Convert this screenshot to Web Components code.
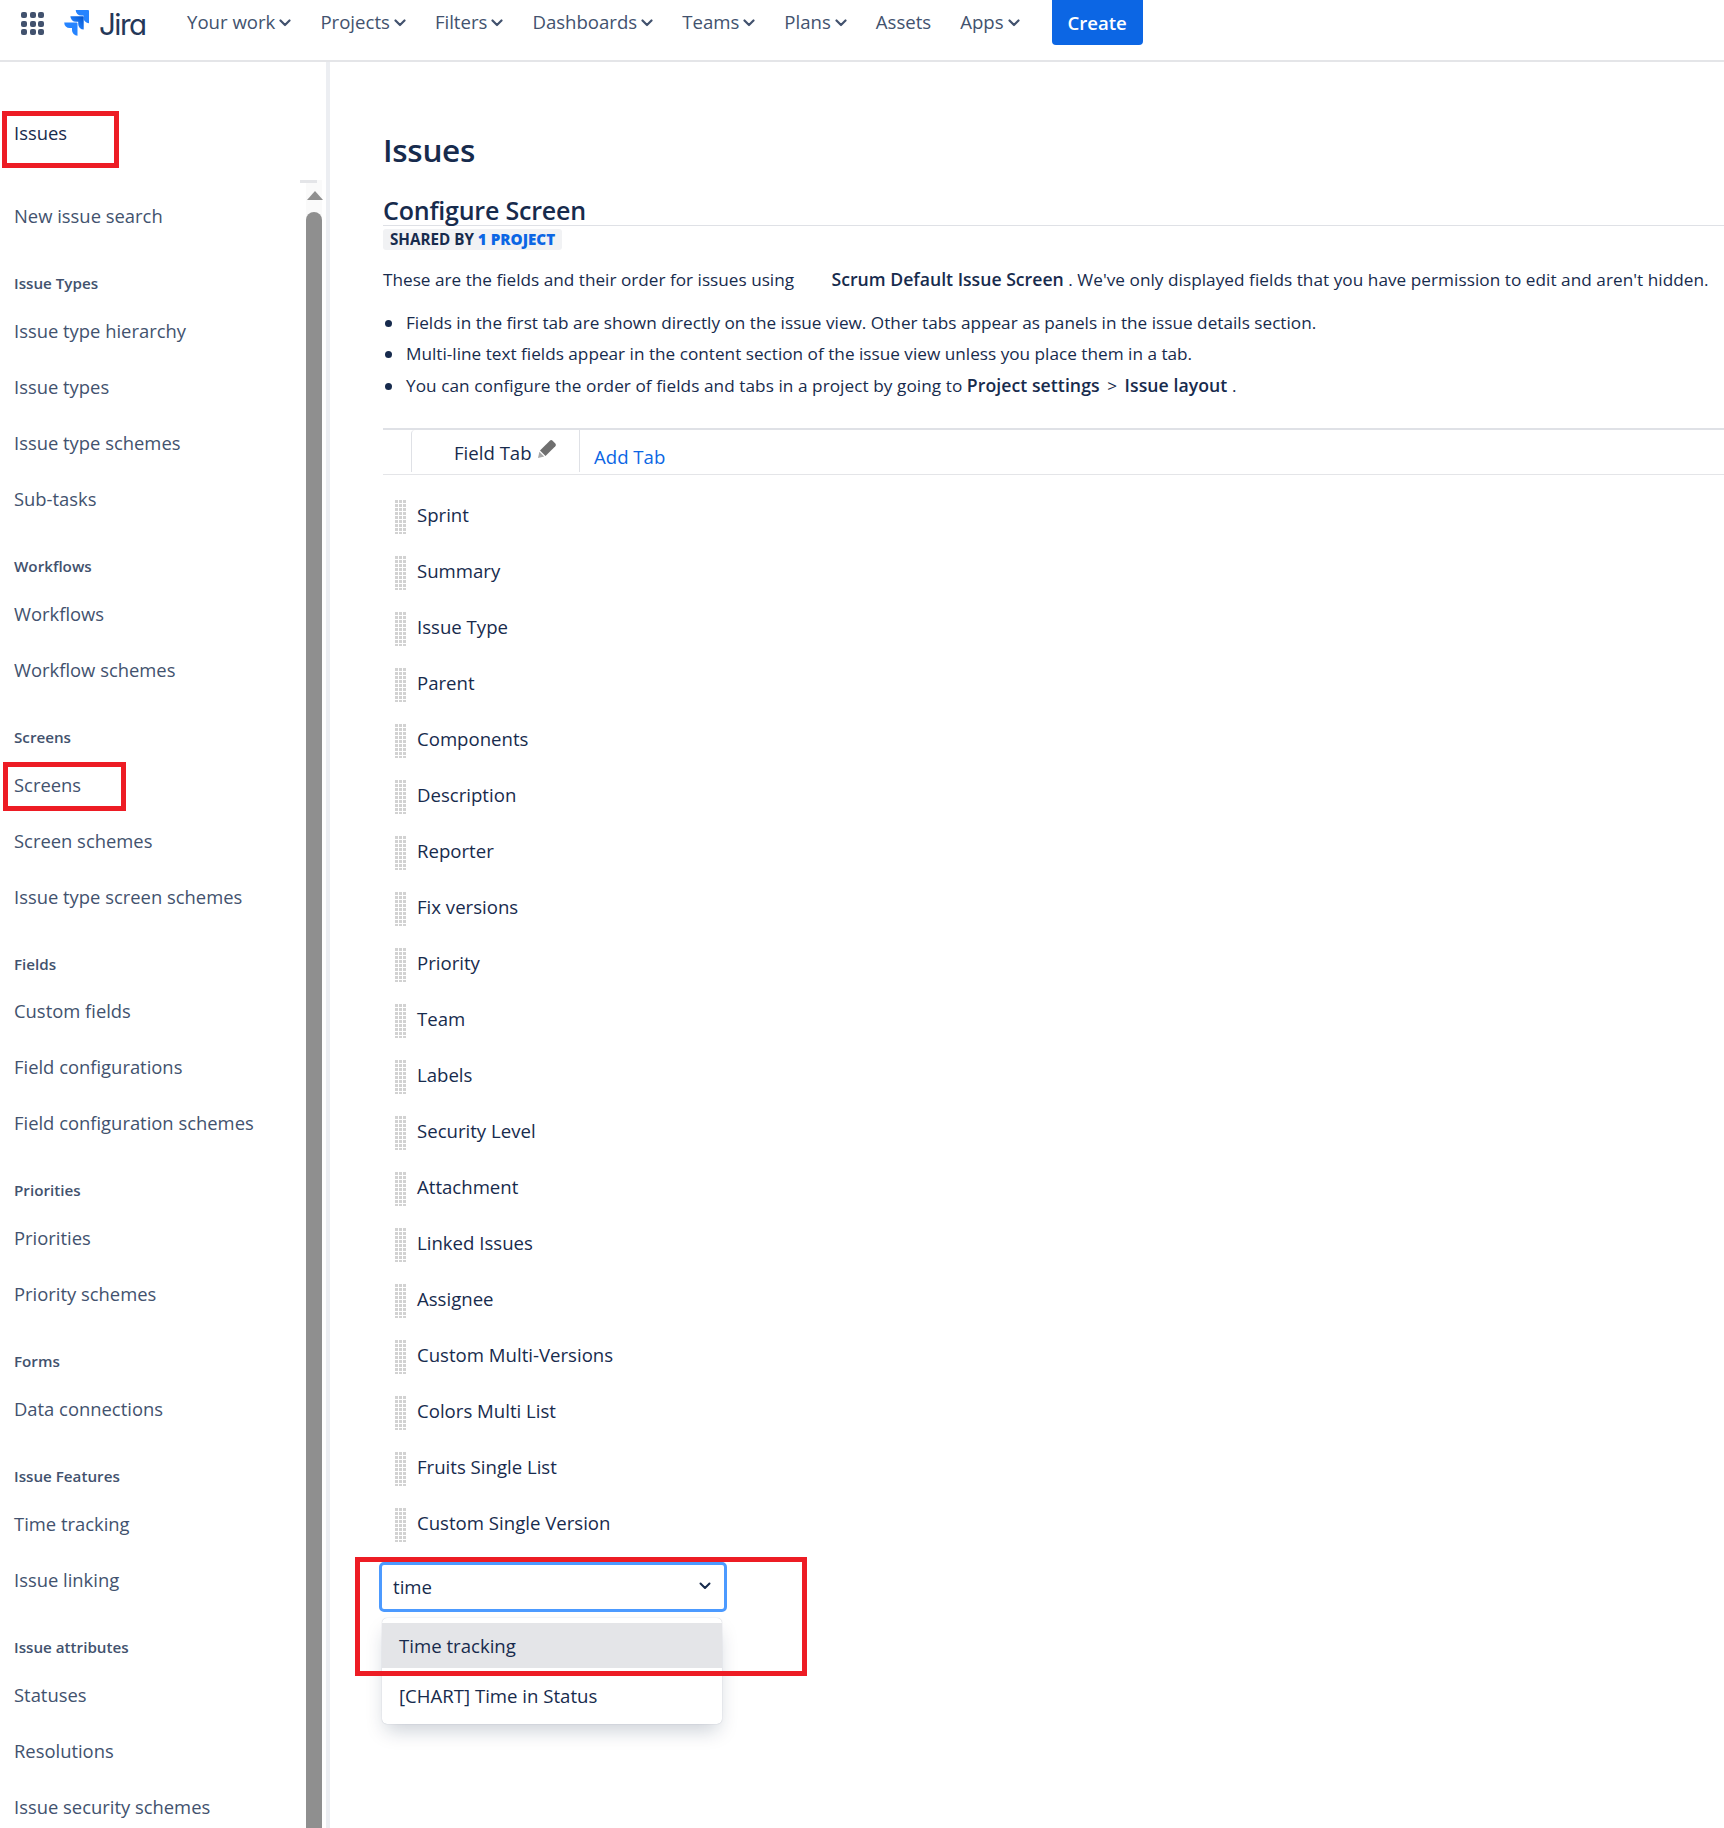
<!DOCTYPE html>
<html lang="en">
<head>
<meta charset="utf-8">
<title>Configure Screen</title>
<style>
    html, body { margin: 0; padding: 0; background: #fff; }
    body {
        width: 1724px;
        height: 1828px;
        overflow: hidden;
        position: relative;
        font-family: "Open Sans", "Noto Sans", sans-serif;
        font-size: 18.6px;
        color: #172b4d;
    }
    .layout { display: flex; align-items: stretch; height: 1766px; }
</style>
</head>
<body>
<jira-header>
    <nav-item menu>Your work</nav-item>
    <nav-item menu>Projects</nav-item>
    <nav-item menu>Filters</nav-item>
    <nav-item menu>Dashboards</nav-item>
    <nav-item menu>Teams</nav-item>
    <nav-item menu>Plans</nav-item>
    <nav-item>Assets</nav-item>
    <nav-item menu>Apps</nav-item>
</jira-header>

<div class="layout">
    <admin-sidebar>
        <side-link>New issue search</side-link>
        <side-head>Issue Types</side-head>
        <side-link>Issue type hierarchy</side-link>
        <side-link>Issue types</side-link>
        <side-link>Issue type schemes</side-link>
        <side-link>Sub-tasks</side-link>
        <side-head>Workflows</side-head>
        <side-link>Workflows</side-link>
        <side-link>Workflow schemes</side-link>
        <side-head>Screens</side-head>
        <side-link>Screens</side-link>
        <side-link>Screen schemes</side-link>
        <side-link>Issue type screen schemes</side-link>
        <side-head>Fields</side-head>
        <side-link>Custom fields</side-link>
        <side-link>Field configurations</side-link>
        <side-link>Field configuration schemes</side-link>
        <side-head>Priorities</side-head>
        <side-link>Priorities</side-link>
        <side-link>Priority schemes</side-link>
        <side-head>Forms</side-head>
        <side-link>Data connections</side-link>
        <side-head>Issue Features</side-head>
        <side-link>Time tracking</side-link>
        <side-link>Issue linking</side-link>
        <side-head>Issue attributes</side-head>
        <side-link>Statuses</side-link>
        <side-link>Resolutions</side-link>
        <side-link>Issue security schemes</side-link>
    </admin-sidebar>

    <screen-page>
        <field-row>Sprint</field-row>
        <field-row>Summary</field-row>
        <field-row>Issue Type</field-row>
        <field-row>Parent</field-row>
        <field-row>Components</field-row>
        <field-row>Description</field-row>
        <field-row>Reporter</field-row>
        <field-row>Fix versions</field-row>
        <field-row>Priority</field-row>
        <field-row>Team</field-row>
        <field-row>Labels</field-row>
        <field-row>Security Level</field-row>
        <field-row>Attachment</field-row>
        <field-row>Linked Issues</field-row>
        <field-row>Assignee</field-row>
        <field-row>Custom Multi-Versions</field-row>
        <field-row>Colors Multi List</field-row>
        <field-row>Fruits Single List</field-row>
        <field-row>Custom Single Version</field-row>
        <field-select value="time">
            <span class="on">Time tracking</span>
            <span>[CHART] Time in Status</span>
        </field-select>
    </screen-page>
</div>

<red-mark x="2" y="111" w="117" h="57"></red-mark>
<red-mark x="3" y="762" w="123" h="49"></red-mark>
<red-mark x="355" y="1557" w="452" h="119"></red-mark>

<script>
class JiraHeader extends HTMLElement {
    constructor() {
        super();
        this.attachShadow({ mode: 'open' });
        this.shadowRoot.innerHTML = `
            <style>
                :host {
                    display: flex;
                    align-items: flex-start;
                    height: 60px;
                    border-bottom: 2px solid #e4e5e8;
                    box-sizing: content-box;
                }
                .waffle {
                    display: grid;
                    grid-template-columns: repeat(3, 6px);
                    gap: 2.5px;
                    margin: 12px 0 0 21px;
                }
                .waffle i { width: 6px; height: 6px; border-radius: 2px; background: #42526e; }
                .logo { display: flex; align-items: center; margin: 8px 0 0 19px; height: 32px; }
                .logo span {
                    font-family: Inter, "Open Sans", sans-serif;
                    font-feature-settings: "cv11" 1;
                    font-size: 29.5px;
                    font-weight: 400;
                    letter-spacing: -1.5px;
                    color: #253858;
                    width: 47px;
                    margin-left: 9px;
                    line-height: 32px;
                }
                nav { display: flex; gap: 29px; margin-left: 41px; height: 43px; align-items: center; }
                .create {
                    margin-left: 32px;
                    width: 91px;
                    height: 45px;
                    border-radius: 0 0 4px 4px;
                    background: #0c66e4;
                    color: #fff;
                    font-size: 18.6px;
                    font-weight: 600;
                    display: flex;
                    align-items: center;
                    justify-content: center;
                }
            </style>
            <div class="waffle">${'<i></i>'.repeat(9)}</div>
            <div class="logo">
                <svg width="27" height="28" viewBox="0 0 27 28">
                    <defs>
                        <linearGradient id="a" x1="1" y1="0" x2="0.3" y2="0.7">
                            <stop offset="0" stop-color="#0052cc"/><stop offset="1" stop-color="#2684ff"/>
                        </linearGradient>
                    </defs>
                    <path fill="#2684ff" d="M26 0H13.6a5.5 5.5 0 0 0 5.5 5.5h2.3v2.2a5.5 5.5 0 0 0 5.5 5.5V1.1A1.1 1.1 0 0 0 26 0z" transform="translate(-.9 0)"/>
                    <path fill="url(#a)" d="M19.8 6.3H7.4a5.5 5.5 0 0 0 5.5 5.5h2.3V14a5.5 5.5 0 0 0 5.5 5.5V7.4a1.1 1.1 0 0 0-1-1.1z"/>
                    <path fill="#2684ff" d="M13.6 12.5H1.2a5.5 5.5 0 0 0 5.5 5.5H9v2.2a5.5 5.5 0 0 0 5.5 5.5V13.6a1.1 1.1 0 0 0-.9-1.1z"/>
                </svg>
                <span>Jira</span>
            </div>
            <nav><slot></slot></nav>
            <div class="create">Create</div>
        `;
    }
}

class NavItem extends HTMLElement {
    constructor() {
        super();
        this.attachShadow({ mode: 'open' });
        this.shadowRoot.innerHTML = `
            <style>
                :host {
                    display: inline-flex;
                    align-items: center;
                    gap: 4px;
                    color: #42526e;
                    font-weight: 500;
                    white-space: nowrap;
                }
                svg { display: none; margin-top: 2px; }
                :host([menu]) svg { display: block; }
            </style>
            <slot></slot>
            <svg width="12" height="8" viewBox="0 0 12 8">
                <path d="M1.5 1.5 6 6l4.5-4.5" fill="none" stroke="#42526e" stroke-width="2.2" stroke-linecap="round" stroke-linejoin="round"/>
            </svg>
        `;
    }
}

class AdminSidebar extends HTMLElement {
    constructor() {
        super();
        this.attachShadow({ mode: 'open' });
        this.shadowRoot.innerHTML = `
            <style>
                :host {
                    display: block;
                    position: relative;
                    flex: 0 0 326px;
                    box-sizing: border-box;
                    height: 100%;
                    overflow: hidden;
                    padding-left: 14px;
                    font-size: 18.4px;
                }
                .title {
                    font-weight: 500;
                    color: #172b4d;
                    line-height: 20px;
                    padding: 61px 0 46px;
                }
                .track {
                    position: absolute;
                    top: 118px;
                    left: 300px;
                    width: 22px;
                    bottom: 0;
                    background: linear-gradient(#fafafa, #fafafa) no-repeat 6px 0 / 16px 100%;
                }
                .track b {
                    position: absolute;
                    left: 0;
                    top: 0;
                    width: 17px;
                    height: 3px;
                    background: #e4e5e8;
                }
                .track u {
                    position: absolute;
                    left: 7px;
                    top: 11px;
                    border: 8px solid transparent;
                    border-top: 0;
                    border-bottom: 9px solid #8f8f8f;
                }
                .track i {
                    position: absolute;
                    left: 6px;
                    width: 16px;
                    top: 32px;
                    bottom: 0;
                    border-radius: 8px 8px 0 0;
                    background: #8f8f8f;
                }
            </style>
            <div class="title">Issues</div>
            <slot></slot>
            <div class="track"><b></b><u></u><i></i></div>
        `;
    }
}

class SideHead extends HTMLElement {
    constructor() {
        super();
        this.attachShadow({ mode: 'open' });
        this.shadowRoot.innerHTML = `
            <style>
                :host {
                    display: block;
                    box-sizing: border-box;
                    height: 58.85px;
                    padding-top: 28px;
                    line-height: 20px;
                    font-size: 15.2px;
                    font-weight: 600;
                    color: #42526e;
                }
            </style>
            <slot></slot>
        `;
    }
}

class SideLink extends HTMLElement {
    constructor() {
        super();
        this.attachShadow({ mode: 'open' });
        this.shadowRoot.innerHTML = `
            <style>
                :host {
                    display: flex;
                    align-items: center;
                    box-sizing: border-box;
                    height: 56px;
                    padding-bottom: 3px;
                    color: #42526e;
                    white-space: nowrap;
                }
            </style>
            <slot></slot>
        `;
    }
}

class ScreenPage extends HTMLElement {
    constructor() {
        super();
        this.attachShadow({ mode: 'open' });
        this.shadowRoot.innerHTML = `
            <style>
                :host {
                    display: block;
                    flex: 1;
                    min-width: 0;
                    box-sizing: border-box;
                    border-left: 4px solid #eceef2;
                    padding: 70px 0 0 53px;
                }
                h1 {
                    margin: 0;
                    font-size: 31.5px;
                    font-weight: 600;
                    line-height: 36px;
                    letter-spacing: -0.3px;
                }
                h2 {
                    margin: 29px 0 0;
                    padding-bottom: 2px;
                    font-size: 25px;
                    font-weight: 600;
                    line-height: 26px;
                    letter-spacing: -0.2px;
                    border-bottom: 1.5px solid #dfe1e6;
                }
                .badge {
                    display: inline-block;
                    margin-top: 3px;
                    padding: 0 7px;
                    border-radius: 3px;
                    background: #f1f2f4;
                    font-size: 15.2px;
                    font-weight: 700;
                    line-height: 21px;
                    vertical-align: top;
                }
                .badge b { color: #0c66e4; }
                p { margin: 16.3px 0 0; line-height: 24px; white-space: nowrap; font-size: 17.2px; }
                p strong { font-size: 17.65px; font-weight: 600; margin-left: 33px; }
                p span { letter-spacing: 0.04px; }
                ul { margin: 14.4px 0 0; padding: 0; list-style: none; font-size: 17.2px; }
                li { line-height: 31.5px; white-space: nowrap; }
                li::before {
                    content: '';
                    display: inline-block;
                    width: 7px;
                    height: 7px;
                    border-radius: 50%;
                    background: #172b4d;
                    margin: 0 14px 0 2px;
                    vertical-align: 2px;
                }
                li strong { font-size: 17.65px; font-weight: 600; }
                li.wide { letter-spacing: 0.06px; }
                li em { font-style: normal; margin: 0 3px; }
                .tabs {
                    display: flex;
                    margin: 27.3px 0 0;
                    height: 44px;
                    border-top: 2px solid #dfe1e6;
                    border-bottom: 1.5px solid #e4e5e8;
                }
                .tab {
                    display: flex;
                    align-items: center;
                    box-sizing: border-box;
                    width: 169px;
                    height: 42px;
                    margin-left: 28px;
                    padding: 2px 0 0 42px;
                    border-style: solid;
                    border-color: #dfe1e6;
                    border-width: 0 1.5px;
                    border-top-left-radius: 4px;
                    white-space: nowrap;
                }
                .tab svg { margin: -7px 0 0 5px; flex: none; }
                .add { margin: 15px 0 0 14px; color: #0c66e4; line-height: 24px; }
                .fields { padding-top: 13px; }
            </style>
            <h1>Issues</h1>
            <h2>Configure Screen</h2>
            <div class="badge">SHARED BY <b>1 PROJECT</b></div>
            <p>These are the fields and their order for issues using <strong>Scrum Default Issue Screen</strong> <span>. We've only displayed fields that you have permission to edit and aren't hidden.</span></p>
            <ul>
                <li>Fields in the first tab are shown directly on the issue view. Other tabs appear as panels in the issue details section.</li>
                <li>Multi-line text fields appear in the content section of the issue view unless you place them in a tab.</li>
                <li class="wide">You can configure the order of fields and tabs in a project by going to <strong>Project settings</strong> <em>&gt;</em> <strong>Issue layout</strong> .</li>
            </ul>
            <div class="tabs">
                <div class="tab">
                    Field Tab
                    <svg width="20" height="20" viewBox="0 0 20 20">
                        <path fill="#6f6f6f" d="M3 11.5 12.8 1.7a2 2 0 0 1 2.8 0l2.7 2.7a2 2 0 0 1 0 2.8L8.5 17z"/>
                        <path fill="#a8a8a8" d="M2.4 12.8 1 19l6.2-1.4z"/>
                    </svg>
                </div>
                <div class="add">Add Tab</div>
            </div>
            <div class="fields"><slot></slot></div>
        `;
    }
}

class FieldRow extends HTMLElement {
    constructor() {
        super();
        this.attachShadow({ mode: 'open' });
        this.shadowRoot.innerHTML = `
            <style>
                :host {
                    display: flex;
                    align-items: center;
                    box-sizing: border-box;
                    height: 56px;
                    padding: 0 0 3px 12px;
                    gap: 11px;
                    white-space: nowrap;
                }
                .grip {
                    width: 11px;
                    height: 35px;
                    margin-bottom: -3px;
                    background:
                        linear-gradient(#fff 1px, transparent 1px) 0 0 / 4px 4px,
                        linear-gradient(90deg, #d2d2d2 3px, transparent 3px) 0 0 / 4px 4px;
                }
            </style>
            <div class="grip"></div>
            <slot></slot>
        `;
    }
}

class FieldSelect extends HTMLElement {
    constructor() {
        super();
        this.attachShadow({ mode: 'open' });
        this.shadowRoot.innerHTML = `
            <style>
                :host {
                    display: block;
                    position: relative;
                    width: 348px;
                    margin: 10px 0 0 -4px;
                }
                .box {
                    display: flex;
                    align-items: center;
                    justify-content: space-between;
                    box-sizing: border-box;
                    height: 50px;
                    padding: 0 13px 2px 11px;
                    border: 3px solid #4c9aff;
                    border-radius: 5px;
                }
                .menu {
                    position: absolute;
                    left: 3px;
                    top: 56px;
                    width: 340px;
                    height: 106px;
                    box-sizing: border-box;
                    padding-top: 5px;
                    background: #fff;
                    border-radius: 5px;
                    box-shadow: 0 10px 20px -4px rgba(9,30,66,.22), 0 0 1px rgba(9,30,66,.31);
                }
                ::slotted(span) {
                    display: flex;
                    align-items: center;
                    height: 45px;
                    padding-left: 17px;
                }
                ::slotted(span.on) { background: #e4e5e8; margin-bottom: 5px; }
            </style>
            <div class="box">
                <span>${this.getAttribute('value')}</span>
                <svg width="12" height="8" viewBox="0 0 12 8">
                    <path d="M1.5 1.5 6 6l4.5-4.5" fill="none" stroke="#172b4d" stroke-width="2" stroke-linecap="round" stroke-linejoin="round"/>
                </svg>
            </div>
            <div class="menu"><slot></slot></div>
        `;
    }
}

class RedMark extends HTMLElement {
    constructor() {
        super();
        this.attachShadow({ mode: 'open' });
        this.shadowRoot.innerHTML = `
            <style>
                :host {
                    position: absolute;
                    box-sizing: border-box;
                    border: 5px solid #ed1c24;
                    pointer-events: none;
                }
            </style>
        `;
        const a = n => this.getAttribute(n) + 'px';
        this.style.cssText = `left:${a('x')};top:${a('y')};width:${a('w')};height:${a('h')}`;
    }
}

customElements.define('jira-header', JiraHeader);
customElements.define('nav-item', NavItem);
customElements.define('admin-sidebar', AdminSidebar);
customElements.define('side-head', SideHead);
customElements.define('side-link', SideLink);
customElements.define('screen-page', ScreenPage);
customElements.define('field-row', FieldRow);
customElements.define('field-select', FieldSelect);
customElements.define('red-mark', RedMark);
</script>
</body>
</html>
